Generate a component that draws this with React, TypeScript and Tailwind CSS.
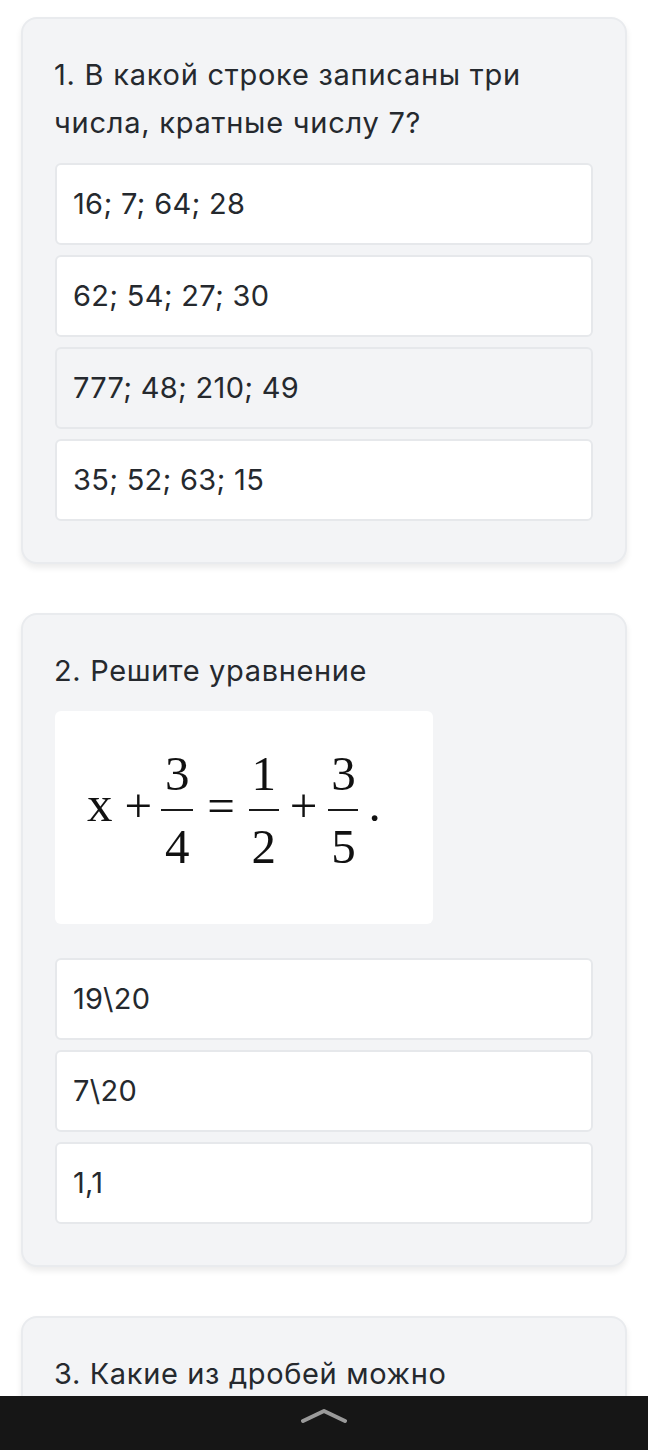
import { ReactNode } from "react";

const font = { fontFamily: "Inter, Roboto, 'Noto Sans', sans-serif" };
const serif = { fontFamily: "'Liberation Serif', 'Times New Roman', serif" };

const Option = ({ text, active }: { text: string; active?: boolean }) => (
  <div
    className={`h-[82px] flex items-center pl-[16px] rounded-md border-2 border-[#e6e8eb] text-[29px] tracking-[0.3px] text-[#25292e] ${
      active ? "bg-[#f3f4f6]" : "bg-white"
    }`}
  >
    {text}
  </div>
);

const Card = ({ children }: { children: ReactNode }) => (
  <div className="mx-[21px] rounded-2xl border-2 border-[#e9ebee] bg-[#f3f4f6] pl-[31px] pr-[32px] pt-[32px] pb-[41px] shadow-[0_4px_6px_rgba(0,0,0,0.08)]">
    {children}
  </div>
);

const Frac = ({ n, d, w }: { n: string; d: string; w: string }) => (
  <span className="inline-flex flex-col items-center">
    <span className="leading-none">{n}</span>
    <span className={`block h-[2px] bg-[#1a1a1a] my-[11px] ${w}`} />
    <span className="leading-none">{d}</span>
  </span>
);

export default function App() {
  return (
    <div className="relative h-[1450px] overflow-hidden bg-white pt-[17px]" style={font}>
      <Card>
        <div className="text-[29px] tracking-[0.75px] leading-[48px] text-[#25292e] pr-8">
          1. В какой строке записаны три числа, кратные числу 7?
        </div>
        <div className="mt-[16px] ml-[1px] flex flex-col gap-[10px]">
          <Option text="16; 7; 64; 28" />
          <Option text="62; 54; 27; 30" />
          <Option text="777; 48; 210; 49" active />
          <Option text="35; 52; 63; 15" />
        </div>
      </Card>

      <div className="h-[49px]" />

      <Card>
        <div className="text-[29px] tracking-[0.65px] leading-[48px] text-[#25292e]">2. Решите уравнение</div>
        <div className="mt-[16px] ml-[1px] w-[378px] h-[213px] rounded-md bg-white flex items-center pl-[32px] pb-[16px]">
          <div className="flex items-center text-[49px] leading-none text-[#111]" style={serif}>
            <span className="text-[51px] font-medium -translate-y-[5px]">x</span>
            <span className="ml-[12px] -translate-y-[4px]">+</span>
            <span className="ml-[9px]"><Frac n="3" d="4" w="w-[32px]" /></span>
            <span className="ml-[14px] -translate-y-[4px]">=</span>
            <span className="ml-[14px]"><Frac n="1" d="2" w="w-[30px]" /></span>
            <span className="ml-[11px] -translate-y-[4px]">+</span>
            <span className="ml-[11px]"><Frac n="3" d="5" w="w-[30px]" /></span>
            <span className="ml-[10px] -translate-y-[5px]">.</span>
          </div>
        </div>
        <div className="mt-[34px] ml-[1px] flex flex-col gap-[10px]">
          <Option text="19\20" />
          <Option text="7\20" />
          <Option text="1,1" />
        </div>
      </Card>

      <div className="h-[49px]" />

      <Card>
        <div className="text-[29px] tracking-[0.65px] leading-[48px] text-[#25292e] h-[300px]">
          3. Какие из дробей можно
        </div>
      </Card>

      <div className="fixed bottom-0 left-0 right-0 h-[54px] bg-[#161616] flex justify-center pt-[12px]">
        <svg width="46" height="16" viewBox="0 0 46 16">
          <path d="M2 13 L23 3 L44 13" fill="none" stroke="#9a9a9a" strokeWidth="4" strokeLinecap="round" strokeLinejoin="round" />
        </svg>
      </div>
    </div>
  );
}
